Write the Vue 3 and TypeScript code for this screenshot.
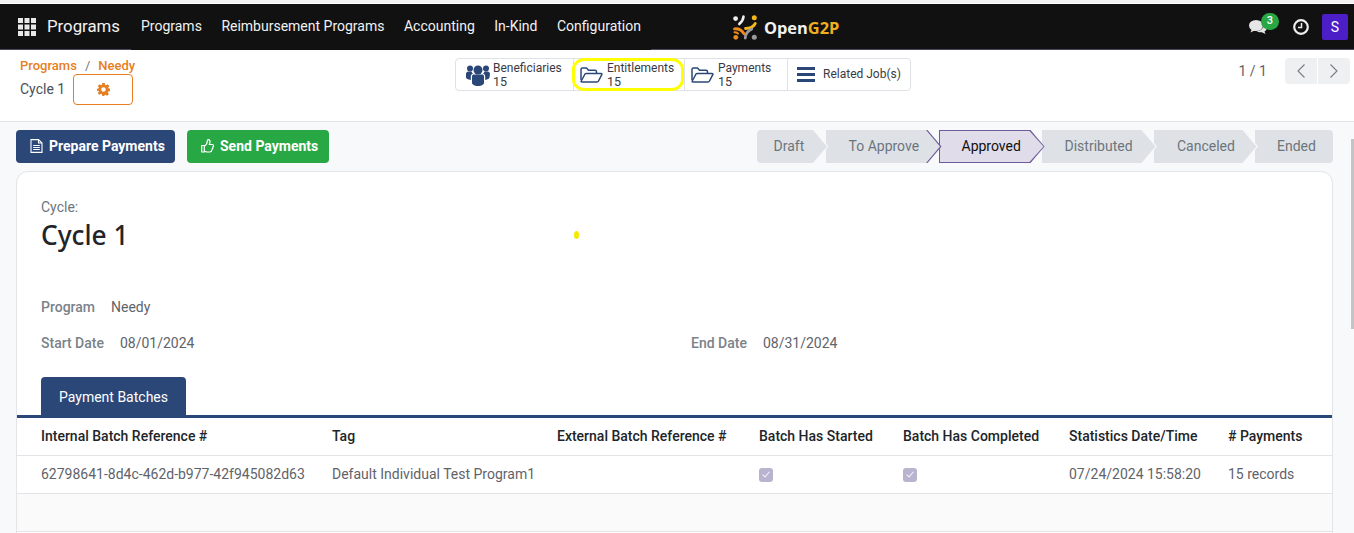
<script setup lang="ts">
const menus: string[] = ['Programs', 'Reimbursement Programs', 'Accounting', 'In-Kind', 'Configuration']
const stages = [
  { label: 'Draft', width: 72 },
  { label: 'To Approve', width: 116 },
  { label: 'Approved', width: 106 },
  { label: 'Distributed', width: 115.5 },
  { label: 'Canceled', width: 104 },
  { label: 'Ended', width: 78 }
]
const activeIndex = 2
const heads: string[] = [
  'Internal Batch Reference #',
  'Tag',
  'External Batch Reference #',
  'Batch Has Started',
  'Batch Has Completed',
  'Statistics Date/Time',
  '# Payments'
]
</script>

<template>
  <div class="page">
    <header class="navbar">
      <svg class="apps" width="18" height="18" viewBox="0 0 18 18" fill="#e8e8e8">
        <rect x="0" y="0" width="5" height="5" /><rect x="6.5" y="0" width="5" height="5" /><rect x="13" y="0" width="5" height="5" />
        <rect x="0" y="6.5" width="5" height="5" /><rect x="6.5" y="6.5" width="5" height="5" /><rect x="13" y="6.5" width="5" height="5" />
        <rect x="0" y="13" width="5" height="5" /><rect x="6.5" y="13" width="5" height="5" /><rect x="13" y="13" width="5" height="5" />
      </svg>
      <span class="brand">Programs</span>
      <nav class="menus">
        <span v-for="m in menus" :key="m">{{ m }}</span>
      </nav>
      <div class="logo">
        <svg width="25" height="25" viewBox="0 0 25 25" fill="none" stroke-linecap="round">
          <circle cx="2.6" cy="3.6" r="2.4" fill="#f0f0f0" />
          <path d="M10.5 1.5C10.3 4.5 8.8 7 6.3 9" stroke="#f0f0f0" stroke-width="2.6" />
          <circle cx="21.3" cy="2.7" r="2.5" fill="#f3b71b" />
          <path d="M22.3 8.5C20.5 11.8 17 13.5 12.5 13.5" stroke="#f3b71b" stroke-width="2.8" />
          <path d="M1.5 13.8C5.500 13.5 9 15.3 11 18.8" stroke="#ef8a1d" stroke-width="2.8" />
          <path d="M1.5 17.3C2.8 17.3 4 17.6 5 18.5" stroke="#ef8a1d" stroke-width="2" />
          <circle cx="2.8" cy="22.3" r="2.4" fill="#ef8a1d" />
          <path d="M18.8 14C14.8 15.8 12.5 19 12.3 23" stroke="#9a9a9a" stroke-width="2.8" />
          <circle cx="21.3" cy="22.3" r="2.5" fill="#9a9a9a" />
        </svg>
        <span class="logo-text">Open<b>G2P</b></span>
      </div>
      <div class="systray">
        <div class="chat">
          <svg width="18" height="16" viewBox="0 0 18 16" fill="#e6e6e6">
            <ellipse cx="7" cy="6.5" rx="7" ry="5.5" />
            <path d="M3 10l-1.5 3.5 5-2.5z" />
            <path d="M14.5 4.5c2.2 1 3.5 2.6 3.5 4.3 0 1.5-1 2.8-2.5 3.7l1 2.5-3.7-1.8c-2 .2-4-.3-5.3-1.2 4 .1 8-2.5 7-7.5z" />
          </svg>
          <span class="badge">3</span>
        </div>
        <svg class="clock" width="16" height="16" viewBox="0 0 16 16" fill="none" stroke="#eee">
          <circle cx="8" cy="8" r="6.8" stroke-width="2.2" />
          <path d="M8.5 4v4.5H5" stroke-width="1.5" />
        </svg>
        <span class="avatar">S</span>
      </div>
    </header>

    <section class="control">
      <div class="crumbs">
        <div class="trail"><span>Programs</span><i>/</i><span>Needy</span></div>
        <div class="title-row">
          <span class="title">Cycle 1</span>
          <button class="gear-btn" type="button">
            <svg width="13" height="13" viewBox="0 0 16 16" fill="#e67e22">
              <path fill-rule="evenodd" d="M6.5 0h3l.4 2.2 1.3.6L13.1 1.5l2.1 2.1-1.3 1.9.6 1.3L16 7v3l-2.2.4-.5 1.3 1.3 1.9-2.1 2.1-1.9-1.300-1.3.5L9 16H6.500l-.4-2.200-1.3-.5-1.900 1.300-1.900-2.100 1.300-1.900-.6-1.300L0 10V7l1.700-.2.600-1.300L1 3.600l2.100-2.100 1.900 1.300 1.200-.6zM8 5.300a2.800 2.800 0 1 0 0 5.600 2.800 2.800 0 0 0 0-5.600z" />
            </svg>
          </button>
        </div>
      </div>

      <div class="stat-group">
        <div class="stat s1">
          <svg width="24" height="22" viewBox="0 0 24 22" fill="#2b4778">
            <circle cx="12" cy="6" r="4.5" /><circle cx="4" cy="4.5" r="3" /><circle cx="20" cy="4.5" r="3" />
            <path d="M6 12.5c0-1.500 1-2 2-2h8c1 0 2 .5 2 2V19c0 1.500-2.500 3-6 3s-6-1.500-6-3z" />
            <path d="M0 10c0-1.500 1-2.500 2.500-2.500h3c.3 1 .8 1.500 1.500 2-1.500.5-2.200 1.500-2.200 3v3.500C2 15.500 0 14.500 0 13.500zM24 10c0-1.500-1-2.500-2.500-2.500h-3c-.3 1-.8 1.500-1.500 2 1.500.5 2.200 1.500 2.200 3v3.500c2.300-.5 4.300-1.500 4.300-2.500z" />
          </svg>
          <div class="stat-text"><span>Beneficiaries</span><span>15</span></div>
        </div>
        <div class="stat s2">
          <svg width="23" height="16" viewBox="0 0 23 16" fill="none" stroke="#2b4778" stroke-width="1.5" stroke-linejoin="round">
            <path d="M1 13V2.500C1 1.500 1.600 1 2.500 1h4l2 2.200H15c1 0 1.500.6 1.500 1.500V6.500" />
            <path d="M1 14.500L5 7c.3-.4.600-.6 1.200-.6H21c.8 0 1.200.6.800 1.300L18.500 14c-.3.6-.8.900-1.500.9H2c-.6 0-1-.2-1-.4z" />
          </svg>
          <div class="stat-text"><span>Entitlements</span><span>15</span></div>
        </div>
        <div class="stat s3">
          <svg width="23" height="16" viewBox="0 0 23 16" fill="none" stroke="#2b4778" stroke-width="1.5" stroke-linejoin="round">
            <path d="M1 13V2.500C1 1.500 1.600 1 2.500 1h4l2 2.200H15c1 0 1.500.6 1.500 1.500V6.500" />
            <path d="M1 14.500L5 7c.3-.4.600-.6 1.200-.6H21c.8 0 1.200.6.800 1.300L18.500 14c-.3.6-.8.900-1.500.9H2c-.6 0-1-.2-1-.4z" />
          </svg>
          <div class="stat-text"><span>Payments</span><span>15</span></div>
        </div>
        <div class="stat s4">
          <svg width="18" height="15" viewBox="0 0 18 15" fill="#2b4778">
            <rect width="18" height="3" /><rect y="6" width="18" height="3" /><rect y="12" width="18" height="3" />
          </svg>
          <span class="single">Related Job(s)</span>
        </div>
        <span class="highlight"></span>
      </div>

      <div class="pager">
        <span class="count">1 / 1</span>
        <div class="pager-btns">
          <button type="button">
            <svg width="10" height="16" viewBox="0 0 10 16" fill="none" stroke="#7a808a" stroke-width="1.2"><path d="M8.5 1.5L2 8l6.500 6.500" /></svg>
          </button>
          <button type="button">
            <svg width="10" height="16" viewBox="0 0 10 16" fill="none" stroke="#7a808a" stroke-width="1.2"><path d="M1.5 1.500L8 8l-6.500 6.500" /></svg>
          </button>
        </div>
      </div>
    </section>

    <main class="content">
      <div class="actions">
        <button class="act blue" type="button">
          <svg width="13" height="14" viewBox="0 0 13 14" fill="none" stroke="#fff" stroke-width="1.1">
            <path d="M1 .6h7.500L12 4v9.400H1z" /><path d="M8.500.6V4H12M3.200 6.500h6.600M3.200 8.500h6.600M3.200 10.500h6.600" />
          </svg>
          Prepare Payments
        </button>
        <button class="act green" type="button">
          <svg width="13" height="14" viewBox="0 0 13 14" fill="none" stroke="#fff" stroke-width="1.2" stroke-linejoin="round">
            <path d="M.7 6.500h2.600v6.500H.7zM3.300 7c1.500-.8 3-3 3-5 0-1 .5-1.400 1.200-1.400 1 0 1.500 1 1.500 2.200 0 1-.4 2-.8 2.700h3c.8 0 1.300.6 1.300 1.300 0 .5-.2.900-.6 1.100.2.800 0 1.400-.6 1.800.1.700-.1 1.300-.7 1.600 0 1-.6 1.700-1.700 1.700H6c-1 0-1.700-.6-2.700-.9" />
          </svg>
          Send Payments
        </button>
        <div class="stages">
          <div
            v-for="(s, i) in stages"
            :key="s.label"
            class="stage"
            :class="{
              active: i === activeIndex,
              'before-active': i === activeIndex - 1,
              first: i === 0,
              last: i === stages.length - 1
            }"
            :style="{ width: s.width + 'px', zIndex: stages.length - i }"
          >
            <span>{{ s.label }}</span>
          </div>
        </div>
      </div>

      <article class="sheet">
        <div class="sheet-head">
          <div class="cycle-label">Cycle:</div>
          <h1>Cycle 1</h1>
          <span class="dot"></span>
        </div>
        <div class="field prog"><label>Program</label><span>Needy</span></div>
        <div class="dates">
          <div class="field"><label>Start Date</label><span>08/01/2024</span></div>
          <div class="field"><label>End Date</label><span>08/31/2024</span></div>
        </div>
        <div class="tabs"><span class="tab">Payment Batches</span></div>
        <div class="table">
          <div class="row head">
            <div v-for="h in heads" :key="h" class="cell">{{ h }}</div>
          </div>
          <div class="row body">
            <div class="cell">62798641-8d4c-462d-b977-42f945082d63</div>
            <div class="cell">Default Individual Test Program1</div>
            <div class="cell"></div>
            <div class="cell"><span class="check"></span></div>
            <div class="cell"><span class="check"></span></div>
            <div class="cell">07/24/2024 15:58:20</div>
            <div class="cell">15 records</div>
          </div>
          <div class="row empty"></div>
        </div>
      </article>
      <span class="scroll-thumb"></span>
    </main>
  </div>
</template>

<style>
html, body { margin: 0; background: #fff; overflow: hidden; }
</style>

<style scoped>
.page {
  width: 1354px;
  height: 533px;
  overflow: hidden;
  display: flex;
  flex-direction: column;
  font-family: Roboto, "Liberation Sans", sans-serif;
  font-size: 14px;
  color: #495057;
  border-top: 3px solid #f2f2f2;
  box-sizing: border-box;
  background: #fff;
}
.navbar {
  flex: 0 0 46px;
  position: relative;
  height: 46px;
  box-sizing: border-box;
  background: #111;
  display: flex;
  align-items: center;
  padding: 0 0 2px 18px;
  color: #f2f2f2;
  margin-top: 1px;
}
.navbar::after {
  content: "";
  position: absolute;
  left: 0;
  right: 0;
  bottom: 0;
  height: 1px;
  background: linear-gradient(to right, #4b4860 131px, transparent 131px, transparent 651px, #4b4860 651px);
}
.apps { margin-top: 2px; }
.brand { font-size: 16.8px; margin-left: 11px; width: 81px; }
.menus { display: flex; gap: 19.5px; font-size: 14px; margin-left: 13px; }
.logo { display: flex; align-items: center; gap: 6px; margin-left: 92px; padding-top: 2px; }
.logo-text { font-family: "Open Sans", Lato, sans-serif; font-weight: 700; font-size: 16.4px; color: #f2f2f2; }
.logo-text b { color: #eeb01d; font-weight: 700; }
.systray { margin-left: auto; display: flex; align-items: center; padding-top: 2px; }
.chat { position: relative; width: 18px; height: 16px; margin-right: 26px; }
.badge {
  position: absolute; left: 12px; top: -6px; width: 18px; height: 17px; border-radius: 9px;
  background: #28a745; color: #fff; font-size: 11px; font-weight: 500; text-align: center; line-height: 15px;
}
.clock { margin-right: 13px; }
.avatar {
  width: 26px; height: 26px; background: #4c1ec8; border-radius: 2px; color: #fff;
  font-size: 14px; text-align: center; line-height: 27px; margin-right: 6px;
}
.control {
  flex: 0 0 72px;
  position: relative;
  box-sizing: border-box;
  border-bottom: 1px solid #e2e4e7;
  display: flex;
  padding: 0 4px 0 20px;
  background: #fff;
}
.crumbs { width: 435px; padding-top: 8px; }
.trail { display: flex; gap: 8px; color: #e67e22; font-size: 13px; font-weight: 500; line-height: 16px; }
.trail i { font-style: normal; color: #777; font-weight: 400; }
.title-row { display: flex; align-items: flex-start; gap: 8px; }
.title { font-size: 14px; line-height: 30px; }
.gear-btn {
  width: 60px; height: 31px; background: #fff; border: 1px solid #e67e22; border-radius: 4px;
  display: flex; align-items: center; justify-content: center; padding: 0;
}
.stat-group {
  position: relative;
  display: flex;
  height: 33px;
  margin-top: 8px;
  box-sizing: border-box;
  border: 1px solid #dee2e6;
  border-radius: 4px;
}
.stat { display: flex; align-items: center; box-sizing: border-box; height: 31px; font-size: 12px; color: #3a3a44; }
.stat + .stat { border-left: 1px solid #dee2e6; }
.s1 { width: 117px; padding-left: 10px; gap: 3px; }
.s2 { width: 111px; padding-left: 6px; gap: 4px; }
.s3 { width: 103px; padding-left: 6px; gap: 4px; }
.s4 { width: 123px; padding-left: 9px; gap: 8px; }
.stat-text { display: flex; flex-direction: column; line-height: 14px; padding-top: 1px; }
.stat-text span + span { font-size: 12.5px; }
.single { font-size: 12px; padding-bottom: 2px; }
.highlight {
  position: absolute; left: 116px; top: -1px; width: 106px; height: 27px;
  border: 3px solid #ffff00; border-radius: 13px / 11px;
  pointer-events: none;
}
.pager { margin-left: auto; display: flex; align-items: flex-start; padding-top: 8px; }
.count { font-size: 14px; margin-right: 18px; line-height: 26px; color: #5f636a; }
.pager-btns { display: flex; gap: 1px; }
.pager-btns button {
  width: 32px; height: 26px; background: #eef0f2; border: 0; padding: 0;
  display: flex; align-items: center; justify-content: center;
}
.pager-btns button:first-child { border-radius: 4px 0 0 4px; }
.pager-btns button:last-child { border-radius: 0 4px 4px 0; }
.content { flex: 1; position: relative; background: #f8f9fa; padding: 8px 21px 0 16px; min-height: 0; }
.actions { display: flex; height: 33px; align-items: stretch; }
.act {
  height: 33px; border: 0; border-radius: 4px; color: #fff; font: 700 14px Roboto, "Liberation Sans", sans-serif;
  display: flex; align-items: center; gap: 6px; padding: 0 0 2px 14px;
}
.blue { width: 159px; background: #2b4778; }
.green { width: 142px; background: #28a745; margin-left: 12px; }
.stages { margin-left: auto; display: flex; }
.stage {
  position: relative; box-sizing: border-box; height: 33px; color: #6c757d; background: #f8f9fa;
  display: flex; align-items: center; padding: 0 0 2px 23px; font-size: 14px; flex: none;
  clip-path: polygon(0 0, calc(100% - 14px) 0, 100% 50%, calc(100% - 14px) 100%, 0 100%);
  margin-right: -3px;
}
.stage::before {
  content: ""; position: absolute; inset: 0 1.5px 0 0;
  background: #dee2e6;
  clip-path: polygon(0 0, calc(100% - 14px) 0, 100% 50%, calc(100% - 14px) 100%, 0 100%);
}
.stage.first { padding-left: 17px; }
.stage.first::before { border-radius: 4px 0 0 4px; }
.stage.last { clip-path: none; background: none; margin-right: 0; padding-left: 22px; }
.stage.last::before { inset: 0; clip-path: none; border-radius: 0 4px 4px 0; }
.stage.before-active { background: #6f5a9c; }
.stage.active { background: #6f5a9c; color: #111; }
.stage.active::before { inset: 1px; background: #e0dcea; }
.stage span { position: relative; }
.sheet {
  margin-top: 8px; background: #fff; border: 1px solid #e2e4e7; border-radius: 12px 12px 0 0;
  position: relative; height: 400px; box-sizing: border-box;
}
.sheet-head { padding: 27px 24px 0; height: 90px; box-sizing: border-box; position: relative; }
.cycle-label { font-size: 14px; line-height: 16px; color: #6c757d; }
h1 {
  margin: 2px 0 0; font-family: "Noto Sans", sans-serif; font-size: 26.3px; line-height: 36px;
  font-weight: 500; color: #212529;
}
.dot { position: absolute; left: 557px; top: 59px; width: 5px; height: 8px; border-radius: 50%; background: #f4ea00; }
.field { display: flex; align-items: baseline; gap: 16px; font-size: 14px; color: #5f636a; }
.field label { font-weight: 500; color: #7a828a; }
.prog { padding: 37px 24px 0; height: 16px; }
.dates { display: flex; padding: 20px 24px 0; height: 16px; }
.dates .field { flex: none; width: 650px; }
.tabs { display: flex; padding-left: 24px; margin-top: 26px; }
.tab {
  width: 145px; height: 38px; box-sizing: border-box; padding-top: 2px; background: #2b4778; color: #fff; border-radius: 4px 4px 0 0;
  display: flex; align-items: center; justify-content: center; font-size: 14px;
}
.table { border-top: 3px solid #2b4778; }
.row {
  display: grid;
  grid-template-columns: 291px 225px 202px 144px 166px 159px 106px;
  box-sizing: border-box;
  border-bottom: 1px solid #e2e4e7;
}
.head { height: 38px; color: #212529; font-weight: 500; }
.body { height: 38px; color: #5f636a; }
.empty { height: 38px; background: #fafafa; }
.cell { box-sizing: border-box; padding: 0 0 2px 24px; display: flex; align-items: center; white-space: nowrap; font-size: 14px; }
.check {
  width: 14px; height: 14px; border-radius: 3px; background: #b9b3d0; position: relative; margin-top: 2px;
}
.check::after {
  content: ""; position: absolute; left: 4.5px; top: 2.5px; width: 3px; height: 6px;
  border: solid #f5f5f8; border-width: 0 1.5px 1.5px 0; transform: rotate(40deg);
}
.scroll-thumb { position: absolute; right: 0; top: 17px; width: 3px; height: 190px; background: #c4c4c4; }
</style>
